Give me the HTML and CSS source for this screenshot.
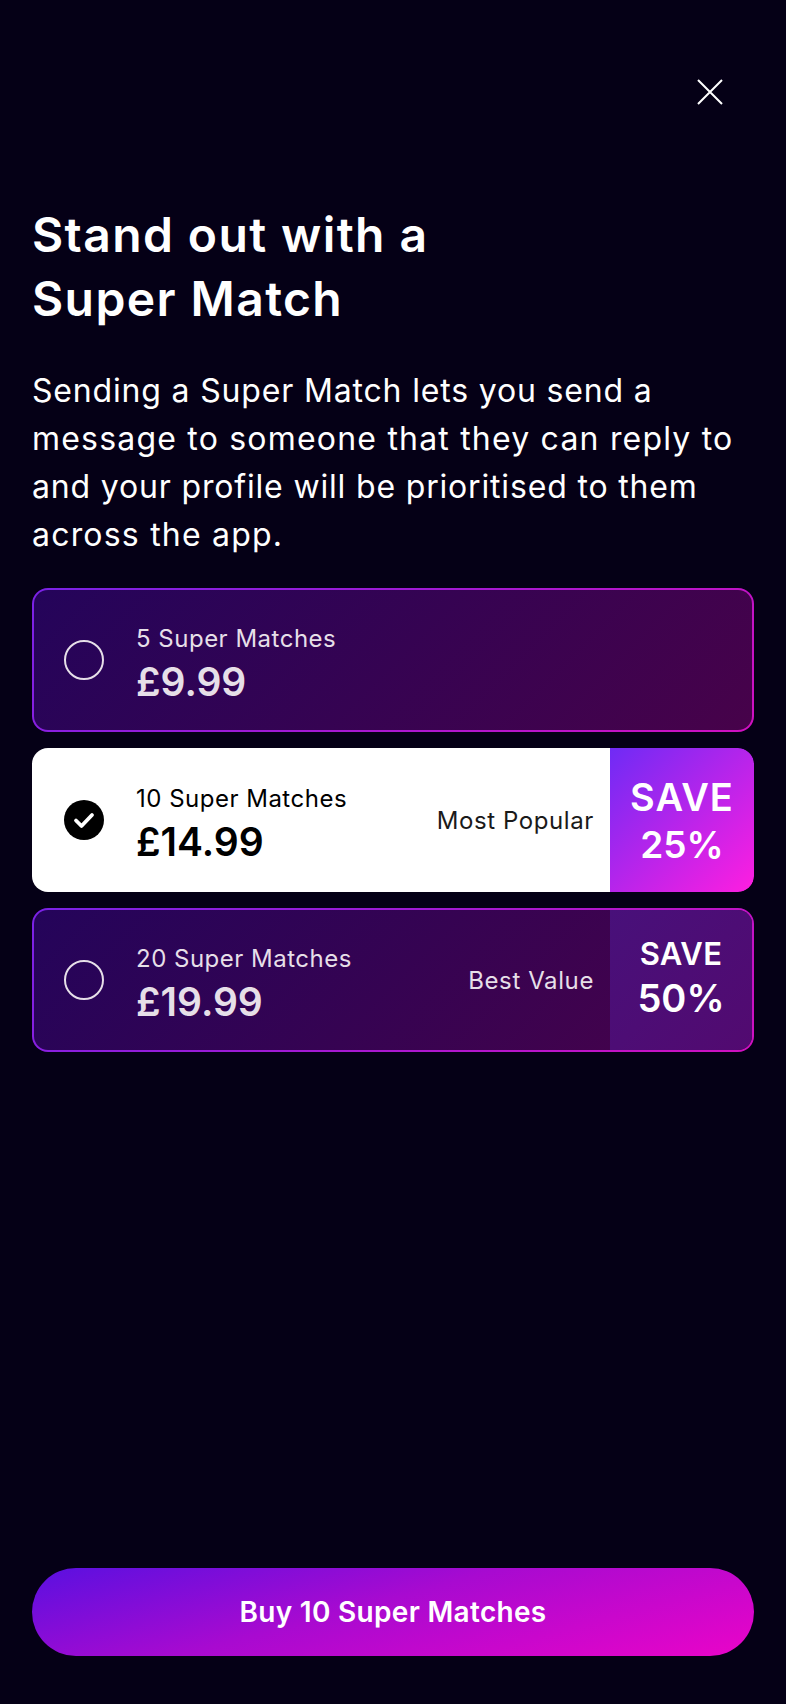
FILE: index.html
```html
<!DOCTYPE html>
<html lang="en">
<head>
  <meta charset="UTF-8" />
  <meta name="viewport" content="width=device-width, initial-scale=1.0" />
  <title>Super Match</title>
  <link rel="stylesheet" href="styles.css">
</head>
<body>
  <div class="screen">
    <div class="top-bar">
      <button class="close-btn" aria-label="Close">
        <svg width="26" height="26" viewBox="0 0 26 26"><path d="M1 1 L25 25 M25 1 L1 25" stroke="#fff" stroke-width="2" fill="none"/></svg>
      </button>
    </div>

    <h1 class="title">Stand out with a<br>Super Match</h1>
    <p class="intro"><span class="tight">Sending a Super Match lets you send a</span><br>message to someone that they can reply to<br><span class="tight">and your profile will be prioritised to them</span><br>across the app.</p>

    <div class="plans">
      <div class="plan">
        <span class="radio"></span>
        <div class="plan-info">
          <div class="plan-name">5 Super Matches</div>
          <div class="plan-price">£9.99</div>
        </div>
      </div>

      <div class="plan selected">
        <span class="radio">
          <svg width="40" height="40" viewBox="0 0 40 40"><circle cx="20" cy="20" r="20" fill="#000"/><path d="M12 20.5 L17.5 26 L28 15" stroke="#fff" stroke-width="3.8" stroke-linecap="round" stroke-linejoin="round" fill="none"/></svg>
        </span>
        <div class="plan-info">
          <div class="plan-name">10 Super Matches</div>
          <div class="plan-price">£14.99</div>
        </div>
        <div class="plan-tag">Most Popular</div>
        <div class="save">
          <span class="save-word">SAVE</span>
          <span class="save-pct">25%</span>
        </div>
      </div>

      <div class="plan">
        <span class="radio"></span>
        <div class="plan-info">
          <div class="plan-name">20 Super Matches</div>
          <div class="plan-price">£19.99</div>
        </div>
        <div class="plan-tag">Best Value</div>
        <div class="save">
          <span class="save-word">SAVE</span>
          <span class="save-pct">50%</span>
        </div>
      </div>
    </div>

    <button class="buy-btn">Buy 10 Super Matches</button>
  </div>
</body>
</html>
```

FILE: styles.css
```css
* {
  box-sizing: border-box;
}
body {
  margin: 0;
  padding: 0;
  background: #050016;
  color: white;
  font-family: 'Inter', 'Open Sans', sans-serif;
}
.screen {
  height: 1704px;
  display: flex;
  flex-direction: column;
  padding: 79px 32px 48px;
}
.top-bar {
  display: flex;
  justify-content: flex-end;
  padding-right: 31px;
}
.close-btn {
  background: none;
  border: none;
  padding: 0;
  height: 26px;
  cursor: pointer;
}
.title {
  margin: 98px 0 0;
  font-size: 48px;
  line-height: 64px;
  font-weight: 600;
  letter-spacing: 1.4px;
}
.intro {
  margin: 36px 0 0;
  font-size: 32px;
  line-height: 48px;
  font-weight: 400;
  letter-spacing: 1.2px;
}
.intro .tight {
  letter-spacing: 0.83px;
}
.plans {
  display: flex;
  flex-direction: column;
  gap: 16px;
  margin-top: 29px;
}
.plan {
  display: flex;
  align-items: center;
  height: 144px;
  border-radius: 16px;
  border: 2px solid transparent;
  background:
    linear-gradient(135deg, #24045a, #47024a) padding-box,
    linear-gradient(135deg, #7a22e6, #d010c0) border-box;
  color: #e6dfe8;
  overflow: hidden;
}
.plan.selected {
  border: none;
  background: linear-gradient(white, white) left / calc(100% - 100px) 100% no-repeat;
  color: #000;
}
.radio {
  width: 40px;
  height: 40px;
  margin-left: 30px;
  border-radius: 50%;
  border: 2px solid #e6dfe8;
  flex-shrink: 0;
}
.selected .radio {
  border: none;
  margin-left: 32px;
}
.radio svg {
  display: block;
}
.plan-info {
  margin: 8px 0 0 32px;
  flex: 1;
}
.plan-name {
  font-size: 24px;
  line-height: 36px;
  letter-spacing: 0.5px;
}
.plan-price {
  font-size: 39px;
  line-height: 50px;
  font-weight: 600;
}
.plan-tag {
  font-size: 24px;
  margin-right: 16px;
  letter-spacing: 0.6px;
}
.selected .plan-tag {
  color: #1a1a1a;
}
.save {
  width: 142px;
  align-self: stretch;
  display: flex;
  flex-direction: column;
  align-items: center;
  justify-content: center;
  color: white;
  font-weight: 600;
  background: linear-gradient(135deg, #48107a, #520a70);
}
.selected .save {
  width: 144px;
  border-radius: 0 16px 16px 0;
  background: linear-gradient(135deg, #6f2bf5, #ff1ee0);
}
.save-word {
  font-size: 31px;
  line-height: 36px;
  letter-spacing: 0.3px;
}
.save-pct {
  font-size: 38px;
  line-height: 52px;
}
.selected .save-word {
  font-size: 38px;
  line-height: 50px;
  letter-spacing: 1px;
}
.selected .save-pct {
  font-size: 37px;
  line-height: 46px;
}
.buy-btn {
  margin-top: auto;
  height: 88px;
  border: none;
  border-radius: 44px;
  background: linear-gradient(165deg, #5a10e0, #a80ad0 45%, #ea04c8);
  color: white;
  font-family: inherit;
  font-size: 28px;
  font-weight: 600;
  letter-spacing: 0.3px;
  cursor: pointer;
}
```
